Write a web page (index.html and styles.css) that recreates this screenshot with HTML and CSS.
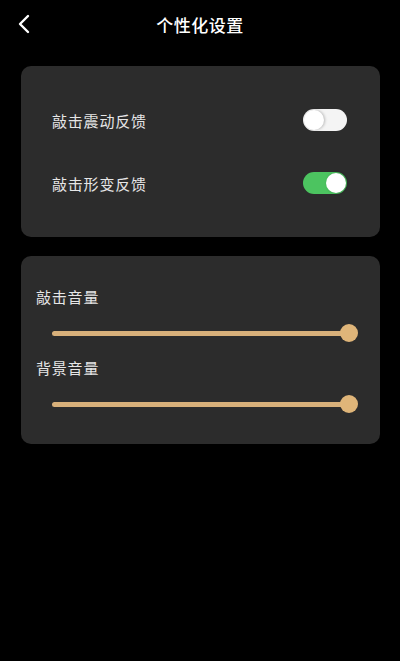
FILE: index.html
```html
<!DOCTYPE html>
<html lang="zh-CN">

<head>
    <meta charset="UTF-8">
    <meta name="viewport" content="width=device-width, initial-scale=1.0">
    <title>个性化设置</title>
    <link rel="stylesheet" href="styles.css">
</head>

<body>
    <div class="header">
        <button class="back-button" aria-label="返回">
            <svg width="16" height="22" viewBox="0 0 16 22">
                <path d="M12 3 L4 11 L12 19" fill="none" stroke="#fff" stroke-width="2.4" stroke-linecap="round" stroke-linejoin="round" />
            </svg>
        </button>
        <h1>个性化设置</h1>
    </div>

    <div class="card switch-card">
        <div class="switch-row">
            <span>敲击震动反馈</span>
            <div class="toggle"><div class="knob"></div></div>
        </div>
        <div class="switch-row">
            <span>敲击形变反馈</span>
            <div class="toggle on"><div class="knob"></div></div>
        </div>
    </div>

    <div class="card volume-card">
        <div class="volume-group">
            <div class="volume-label">敲击音量</div>
            <div class="slider">
                <div class="track"></div>
                <div class="thumb"></div>
            </div>
        </div>
        <div class="volume-group">
            <div class="volume-label">背景音量</div>
            <div class="slider">
                <div class="track"></div>
                <div class="thumb"></div>
            </div>
        </div>
    </div>
</body>

</html>
```

FILE: styles.css
```css
body {
    margin: 0;
    background-color: #000;
    font-family: "Noto Sans CJK SC", "Noto Sans", sans-serif;
    color: #e6e6e6;
    width: 400px;
    height: 661px;
    overflow: hidden;
}

.header {
    position: relative;
    height: 48px;
    display: flex;
    align-items: center;
    justify-content: center;
}

.header h1 {
    margin: 0;
    font-size: 17px;
    font-weight: 500;
    color: #fff;
    letter-spacing: 0.5px;
}

.back-button {
    position: absolute;
    left: 13px;
    top: 12px;
    background: none;
    border: none;
    padding: 0;
    width: 22px;
    height: 24px;
    display: flex;
    align-items: center;
    justify-content: center;
}

.card {
    background-color: #2c2c2c;
    border-radius: 10px;
    margin: 0 20px 0 21px;
}

.switch-card {
    margin-top: 18px;
    height: 171px;
    padding: 0 33px 0 31px;
    box-sizing: border-box;
    display: flex;
    flex-direction: column;
    justify-content: center;
    gap: 41px;
}

.switch-row {
    display: flex;
    align-items: center;
    justify-content: space-between;
    height: 22px;
    font-size: 15px;
    letter-spacing: 0.8px;
}

.toggle {
    width: 44px;
    height: 22px;
    border-radius: 11px;
    background-color: #f4f4f4;
    position: relative;
}

.toggle .knob {
    position: absolute;
    top: 1px;
    left: 1px;
    width: 20px;
    height: 20px;
    border-radius: 50%;
    background-color: #fff;
    box-shadow: 1px 0 3px rgba(0, 0, 0, 0.25);
}

.toggle.on {
    background-color: #4cc460;
}

.toggle.on .knob {
    left: 23px;
}

.volume-card {
    margin-top: 19px;
    height: 188px;
    padding: 31px 22px 0 15px;
    box-sizing: border-box;
}

.volume-group {
    margin-bottom: 15px;
}

.volume-label {
    font-size: 15px;
    line-height: 20px;
    letter-spacing: 0.8px;
}

.slider {
    position: relative;
    height: 20px;
    margin: 16px 0 0 16px;
}

.slider .track {
    position: absolute;
    left: 0;
    right: 8px;
    top: 8px;
    height: 5px;
    border-radius: 3px;
    background-color: #d8b07a;
}

.slider .thumb {
    position: absolute;
    right: 0;
    top: 1px;
    width: 18px;
    height: 18px;
    border-radius: 50%;
    background-color: #dfb579;
}
```
